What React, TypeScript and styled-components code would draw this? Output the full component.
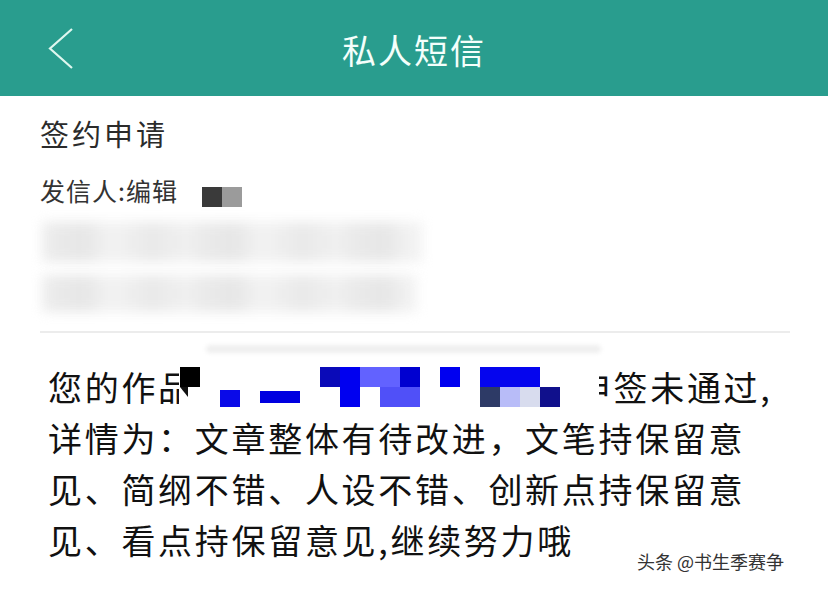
import styled, { createGlobalStyle } from "styled-components";

const GlobalStyle = createGlobalStyle`
  html, body {
    margin: 0;
    padding: 0;
    background: #ffffff;
  }
  body {
    font-family: "Noto Sans CJK SC", "Noto Sans", sans-serif;
  }
`;

// pixel mosaic hiding the book title, coords relative to the svg
const mosaicCells: { x: number; y: number; w: number; h: number; c: string }[] = [
  { x: 1, y: 0, w: 20, h: 20, c: "#000000" },
  { x: 41, y: 23, w: 20, h: 17, c: "#0a0ae8" },
  { x: 81, y: 24, w: 40, h: 12, c: "#0000e0" },
  { x: 141, y: 0, w: 20, h: 20, c: "#0a0ab8" },
  { x: 161, y: 0, w: 20, h: 20, c: "#0000f0" },
  { x: 181, y: 0, w: 40, h: 20, c: "#6262ff" },
  { x: 221, y: 0, w: 20, h: 20, c: "#0000d0" },
  { x: 161, y: 20, w: 20, h: 20, c: "#0000f0" },
  { x: 201, y: 20, w: 40, h: 20, c: "#5050f8" },
  { x: 261, y: 0, w: 20, h: 20, c: "#0000f0" },
  { x: 301, y: 0, w: 60, h: 20, c: "#0505ee" },
  { x: 301, y: 20, w: 20, h: 20, c: "#2d3a66" },
  { x: 321, y: 20, w: 20, h: 20, c: "#b8bcf8" },
  { x: 341, y: 20, w: 20, h: 20, c: "#d8dcee" },
  { x: 361, y: 20, w: 20, h: 20, c: "#10108c" },
];

function Mosaic() {
  return (
    <MosaicSvg width="420" height="44" viewBox="0 -2 420 44">
      <rect x="0" y="-2" width="420" height="44" fill="#ffffff" />
      {mosaicCells.map((m, i) => (
        <rect key={i} x={m.x} y={m.y} width={m.w} height={m.h} fill={m.c} />
      ))}
      <polygon points="1,20 9,20 9,30" fill="#111111" />
    </MosaicSvg>
  );
}

export default function App() {
  return (
    <Page>
      <GlobalStyle />
      <Header>
        <BackButton>
          <svg width="30" height="46" viewBox="0 0 30 46">
            <polyline
              points="26,2 4,21.5 26,41"
              fill="none"
              stroke="#dff7ef"
              strokeWidth="2.2"
            />
          </svg>
        </BackButton>
        <Title>私人短信</Title>
        <Spacer />
      </Header>

      <Content>
        <Subject>签约申请</Subject>
        <Sender>
          发信人:编辑
          <SenderMask>
            <MaskCell $color="#3a3a3a" />
            <MaskCell $color="#9b9b9b" />
          </SenderMask>
        </Sender>
        <BlurLine $width={380} $height={40} $gap={14} />
        <BlurLine $width={375} $height={37} $gap={13} />
        <Divider />

        <Smudge />
        <Message>
          <Line>
            您的作品
            <Mosaic />
            申签未通过,
          </Line>
          <Line>详情为：文章整体有待改进，文笔持保留意</Line>
          <Line>见、简纲不错、人设不错、创新点持保留意</Line>
          <Line>见、看点持保留意见,继续努力哦</Line>
        </Message>
      </Content>

      <Watermark>头条 @书生季赛争</Watermark>
    </Page>
  );
}

const Page = styled.div`
  position: relative;
  width: 828px;
  height: 590px;
  overflow: hidden;
  background: #ffffff;
`;

const Header = styled.div`
  display: grid;
  grid-template-columns: 100px 1fr 100px;
  align-items: center;
  height: 96px;
  background-color: #299d8e;
`;

const BackButton = styled.div`
  display: flex;
  align-items: center;
  padding-left: 46px;
  padding-top: 4px;
`;

const Title = styled.div`
  text-align: center;
  font-size: 34px;
  letter-spacing: 2px;
  color: #f4fffb;
  padding-top: 2px;
`;

const Spacer = styled.div``;

const Content = styled.div`
  display: flex;
  flex-direction: column;
  padding: 0 38px 0 40px;
`;

const Subject = styled.div`
  margin-top: 17px;
  height: 40px;
  line-height: 40px;
  font-size: 29px;
  letter-spacing: 3px;
  color: #2b2b2b;
`;

const Sender = styled.div`
  display: flex;
  align-items: center;
  margin-top: 19px;
  height: 36px;
  line-height: 36px;
  font-size: 25px;
  letter-spacing: 1px;
  color: #333333;
`;

const SenderMask = styled.div`
  display: flex;
  margin-left: 24px;
  margin-top: 14px;
`;

const MaskCell = styled.div<{ $color: string }>`
  width: 20px;
  height: 20px;
  background: ${({ $color }) => $color};
`;

const BlurLine = styled.div<{ $width: number; $height: number; $gap: number }>`
  width: ${({ $width }) => $width}px;
  height: ${({ $height }) => $height}px;
  margin-top: ${({ $gap }) => $gap}px;
  margin-left: 2px;
  background: repeating-linear-gradient(
    90deg,
    #eaeaea 0px,
    #e2e2e2 40px,
    #f1f1f1 70px,
    #e6e6e6 110px,
    #efefef 150px
  );
  filter: blur(6px);
  opacity: 0.85;
`;

const Divider = styled.div`
  height: 2px;
  margin-top: 19px;
  background: #ececec;
`;

const Smudge = styled.div`
  width: 395px;
  height: 8px;
  margin: 12px 0 0 166px;
  background: #efefef;
  border-radius: 6px;
  filter: blur(2px);
`;

const Message = styled.div`
  display: flex;
  flex-direction: column;
  margin-top: 8px;
  padding-left: 8px;
`;

const Line = styled.div`
  display: flex;
  align-items: center;
  height: 51px;
  font-size: 34px;
  letter-spacing: 2.7px;
  color: #111111;
  white-space: nowrap;
`;

const MosaicSvg = styled.svg`
  display: block;
  flex-shrink: 0;
  position: relative;
  z-index: 1;
  margin: 0 -22px 0 -16px;
`;

const Watermark = styled.div`
  position: absolute;
  right: 44px;
  bottom: 16px;
  font-size: 18px;
  color: #333333;
  text-shadow: 0 0 2px #ffffff, 1px 1px 0 #ffffff;
`;
